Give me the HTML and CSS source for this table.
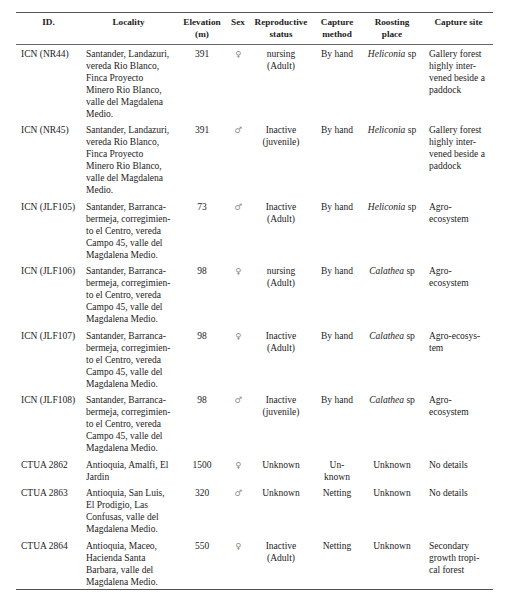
FILE: index.html
```html
<!DOCTYPE html>
<html>
<head>
<meta charset="utf-8">
<link rel="stylesheet" href="styles.css">
</head>
<body>
<table class="data">
<colgroup>
<col class="c-id"><col class="c-loc"><col class="c-elev"><col class="c-sex"><col class="c-rep"><col class="c-meth"><col class="c-roost"><col class="c-site">
</colgroup>
<thead>
<tr>
<th>ID.</th><th>Locality</th><th>Elevation<br>(m)</th><th>Sex</th><th>Reproductive<br>status</th><th>Capture<br>method</th><th>Roosting<br>place</th><th>Capture site</th>
</tr>
</thead>
<tbody>
<tr>
<td class="l">ICN (NR44)</td>
<td class="l">Santander, Landazuri,<br>vereda Rio Blanco,<br>Finca Proyecto<br>Minero Rio Blanco,<br>valle del Magdalena<br>Medio.</td>
<td>391</td><td class="sex">♀</td><td>nursing<br>(Adult)</td><td>By hand</td><td><i>Heliconia</i> sp</td>
<td class="l">Gallery forest<br>highly inter-<br>vened beside a<br>paddock</td>
</tr>
<tr>
<td class="l">ICN (NR45)</td>
<td class="l">Santander, Landazuri,<br>vereda Rio Blanco,<br>Finca Proyecto<br>Minero Rio Blanco,<br>valle del Magdalena<br>Medio.</td>
<td>391</td><td class="sex">♂</td><td>Inactive<br>(juvenile)</td><td>By hand</td><td><i>Heliconia</i> sp</td>
<td class="l">Gallery forest<br>highly inter-<br>vened beside a<br>paddock</td>
</tr>
<tr>
<td class="l">ICN (JLF105)</td>
<td class="l">Santander, Barranca-<br>bermeja, corregimien-<br>to el Centro, vereda<br>Campo 45, valle del<br>Magdalena Medio.</td>
<td>73</td><td class="sex">♂</td><td>Inactive<br>(Adult)</td><td>By hand</td><td><i>Heliconia</i> sp</td>
<td class="l">Agro-<br>ecosystem</td>
</tr>
<tr>
<td class="l">ICN (JLF106)</td>
<td class="l">Santander, Barranca-<br>bermeja, corregimien-<br>to el Centro, vereda<br>Campo 45, valle del<br>Magdalena Medio.</td>
<td>98</td><td class="sex">♀</td><td>nursing<br>(Adult)</td><td>By hand</td><td><i>Calathea</i> sp</td>
<td class="l">Agro-<br>ecosystem</td>
</tr>
<tr>
<td class="l">ICN (JLF107)</td>
<td class="l">Santander, Barranca-<br>bermeja, corregimien-<br>to el Centro, vereda<br>Campo 45, valle del<br>Magdalena Medio.</td>
<td>98</td><td class="sex">♀</td><td>Inactive<br>(Adult)</td><td>By hand</td><td><i>Calathea</i> sp</td>
<td class="l">Agro-ecosys-<br>tem</td>
</tr>
<tr>
<td class="l">ICN (JLF108)</td>
<td class="l">Santander, Barranca-<br>bermeja, corregimien-<br>to el Centro, vereda<br>Campo 45, valle del<br>Magdalena Medio.</td>
<td>98</td><td class="sex">♂</td><td>Inactive<br>(juvenile)</td><td>By hand</td><td><i>Calathea</i> sp</td>
<td class="l">Agro-<br>ecosystem</td>
</tr>
<tr>
<td class="l">CTUA 2862</td>
<td class="l">Antioquia, Amalfi, El<br>Jardin</td>
<td>1500</td><td class="sex">♀</td><td>Unknown</td><td>Un-<br>known</td><td>Unknown</td>
<td class="l">No details</td>
</tr>
<tr>
<td class="l">CTUA 2863</td>
<td class="l">Antioquia, San Luis,<br>El Prodigio, Las<br>Confusas, valle del<br>Magdalena Medio.</td>
<td>320</td><td class="sex">♂</td><td>Unknown</td><td>Netting</td><td>Unknown</td>
<td class="l">No details</td>
</tr>
<tr class="last">
<td class="l">CTUA 2864</td>
<td class="l">Antioquia, Maceo,<br>Hacienda Santa<br>Barbara, valle del<br>Magdalena Medio.</td>
<td>550</td><td class="sex">♀</td><td>Inactive<br>(Adult)</td><td>Netting</td><td>Unknown</td>
<td class="l">Secondary<br>growth tropi-<br>cal forest</td>
</tr>
</tbody>
</table>
</body>
</html>
```
FILE: styles.css
```css
html, body {
  margin: 0;
  padding: 0;
  background: #ffffff;
}
body {
  font-family: "Liberation Serif", "Times New Roman", serif;
  font-size: 9.5px;
  color: #222222;
}
.data {
  margin: 12px 0 0 16px;
  width: 477px;
  border-collapse: collapse;
  table-layout: fixed;
}
.c-id { width: 65px; }
.c-loc { width: 95px; }
.c-elev { width: 52px; }
.c-sex { width: 20px; }
.c-rep { width: 66px; }
.c-meth { width: 46px; }
.c-roost { width: 64px; }
.c-site { width: 69px; }
.data th, .data td {
  line-height: 12px;
  vertical-align: top;
  text-align: center;
  white-space: nowrap;
  padding: 3px 0 1.5px 0;
}
.data th {
  font-size: 9.2px;
  font-weight: bold;
  border-top: 1.5px solid #555555;
  border-bottom: 1px solid #666666;
  padding: 3px 0 3.5px 0;
}
.data td.l {
  text-align: left;
  padding-left: 5px;
}
.data .sex {
  color: #8a8a8a;
  font-family: "DejaVu Sans", sans-serif;
  font-size: 8.5px;
}
.data tr.last td {
  border-bottom: 1.5px solid #555555;
}
.data i {
  font-style: italic;
}
```
